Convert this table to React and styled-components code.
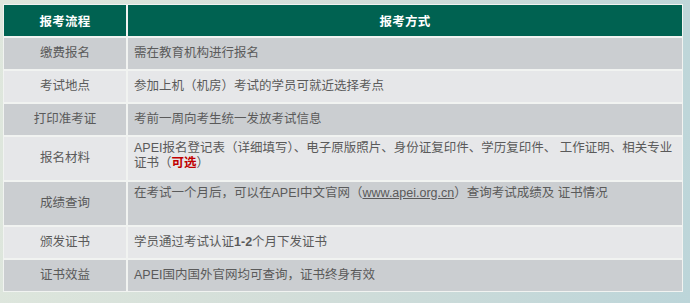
import React from "react"
import styled, { createGlobalStyle } from "styled-components"

const GlobalStyle = createGlobalStyle`
  html, body {
    margin: 0;
    padding: 0;
  }
  body {
    font-family: "Liberation Sans", "Noto Sans CJK SC", sans-serif;
    background: linear-gradient(100deg, #dfe7dd 0%, #d3ded9 45%, #bcd5d9 100%);
  }
`

const Page = styled.div`
  width: 690px;
  height: 303px;
  box-sizing: border-box;
  padding: 4px 0 0 3px;
`

const Table = styled.div`
  display: grid;
  grid-template-columns: 122px 1fr;
  gap: 2px;
  padding: 1px;
  width: 680px;
  box-sizing: border-box;
  background: #f1f3f1;
`

const HeadCell = styled.div`
  height: 31px;
  display: flex;
  align-items: center;
  justify-content: center;
  background: #006251;
  color: #ffffff;
  font-size: 12.5px;
  font-weight: bold;
  letter-spacing: 0.2px;
`

const Cell = styled.div`
  height: ${(props) => (props.$tall ? "43px" : "31px")};
  box-sizing: border-box;
  display: flex;
  align-items: ${(props) => (props.$top ? "flex-start" : "center")};
  justify-content: ${(props) => (props.$center ? "center" : "flex-start")};
  padding: ${(props) => (props.$top ? "4px 6px 0" : "0 6px")};
  background: ${(props) => (props.$dark ? "#cbced1" : "#e6e7e9")};
  color: #5a5a5a;
  font-size: 12.5px;
  line-height: 15px;
  white-space: nowrap;
`

const Text = styled.div`
  display: block;
`

const Red = styled.b`
  color: #c00000;
`

const Link = styled.span`
  text-decoration: underline;
`

const rows = [
  { name: "缴费报名", body: "需在教育机构进行报名" },
  { name: "考试地点", body: "参加上机（机房）考试的学员可就近选择考点" },
  { name: "打印准考证", body: "考前一周向考生统一发放考试信息" },
  {
    name: "报名材料",
    tall: true,
    body: (
      <>
        APEI报名登记表（详细填写）、电子原版照片、身份证复印件、学历复印件、 工作证明、相关专业
        <br />
        证书（<Red>可选</Red>）
      </>
    ),
  },
  {
    name: "成绩查询",
    tall: true,
    body: (
      <>
        在考试一个月后，可以在APEI中文官网（<Link>www.apei.org.cn</Link>）查询考试成绩及 证书情况
      </>
    ),
  },
  {
    name: "颁发证书",
    body: (
      <>
        学员通过考试认证<b>1-2</b>个月下发证书
      </>
    ),
  },
  { name: "证书效益", body: "APEI国内国外官网均可查询，证书终身有效" },
]

const App = () => {
  const mappedRows = rows.map((row, i) => (
    <React.Fragment key={row.name}>
      <Cell $dark={i % 2 === 0} $tall={row.tall} $center>
        {row.name}
      </Cell>
      <Cell $dark={i % 2 === 0} $tall={row.tall} $top={row.tall}>
        <Text>{row.body}</Text>
      </Cell>
    </React.Fragment>
  ))
  return (
    <Page>
      <GlobalStyle />
      <Table>
        <HeadCell>报考流程</HeadCell>
        <HeadCell>报考方式</HeadCell>
        {mappedRows}
      </Table>
    </Page>
  )
}

export default App
